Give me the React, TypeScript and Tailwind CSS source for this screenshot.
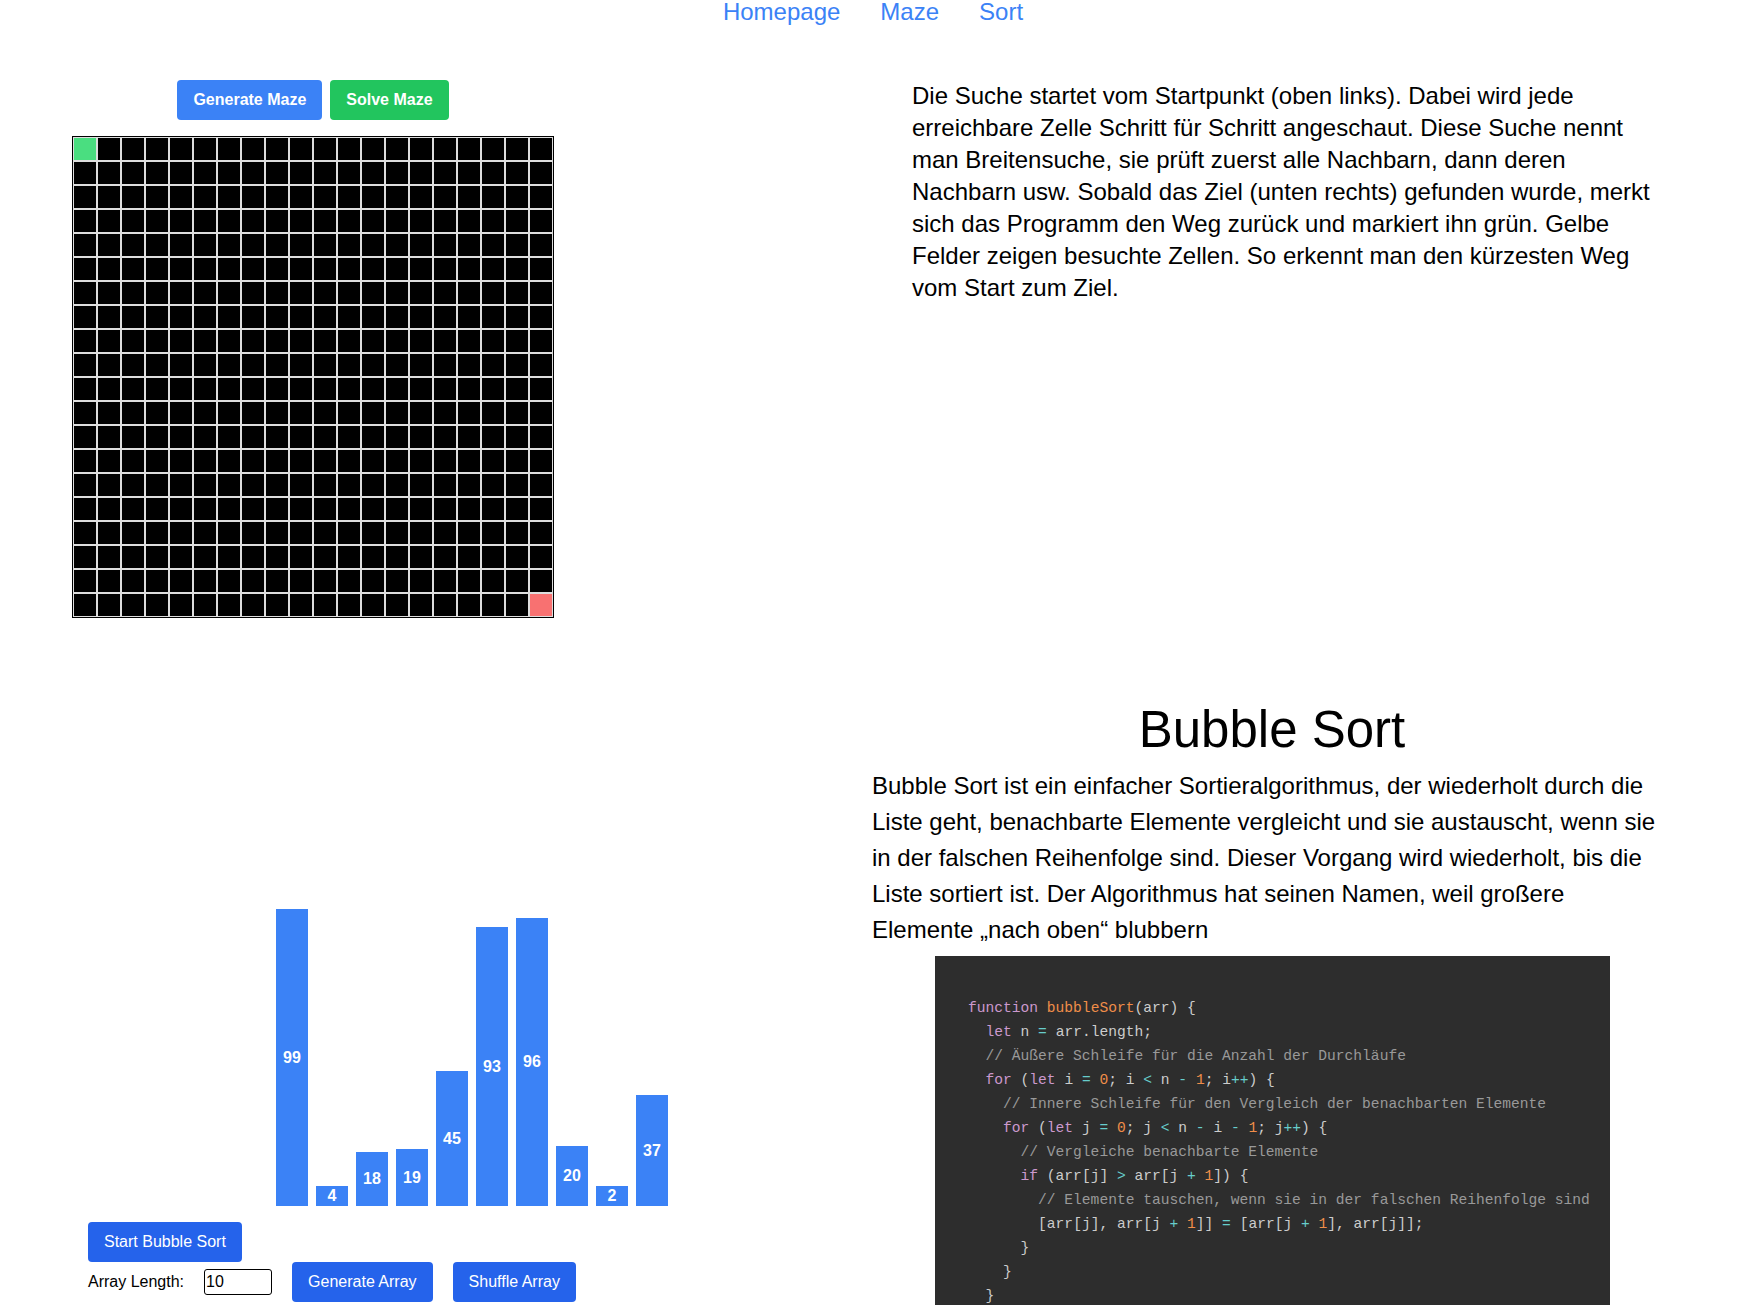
import React from 'react'

const BARS = [99, 4, 18, 19, 45, 93, 96, 20, 2, 37]
const SIZE = 20

const CODE_LINES = [
  '',
  '  function bubbleSort(arr) {',
  '    let n = arr.length;',
  '    // Äußere Schleife für die Anzahl der Durchläufe',
  '    for (let i = 0; i < n - 1; i++) {',
  '      // Innere Schleife für den Vergleich der benachbarten Elemente',
  '      for (let j = 0; j < n - i - 1; j++) {',
  '        // Vergleiche benachbarte Elemente',
  '        if (arr[j] > arr[j + 1]) {',
  '          // Elemente tauschen, wenn sie in der falschen Reihenfolge sind',
  '          [arr[j], arr[j + 1]] = [arr[j + 1], arr[j]];',
  '        }',
  '      }',
  '    }',
  '    return arr;',
  '  }',
]

const TOKEN_CLASS: Record<string, string> = {
  cm: 'text-[#999999]',
  kw: 'text-[#cc99cd]',
  fn: 'text-[#f08d49]',
  num: 'text-[#f08d49]',
  op: 'text-[#67cdcc]',
  p: 'text-[#cccccc]',
}

function tokenize(line: string) {
  const out: [string, string][] = []
  const re = /(\/\/.*)|\b(function|let|for|if|return)\b|(bubbleSort)|(\d+)|(\+\+|[=<>+-])|([^\s\w]+|\w+|\s+)/g
  let m: RegExpExecArray | null
  while ((m = re.exec(line))) {
    if (m[1]) out.push([m[1], 'cm'])
    else if (m[2]) out.push([m[2], 'kw'])
    else if (m[3]) out.push([m[3], 'fn'])
    else if (m[4]) out.push([m[4], 'num'])
    else if (m[5]) out.push([m[5], 'op'])
    else out.push([m[6], 'p'])
  }
  return out
}

function Maze() {
  const cells = []
  for (let r = 0; r < SIZE; r++) {
    for (let c = 0; c < SIZE; c++) {
      let bg = 'bg-black'
      if (r === 0 && c === 0) bg = 'bg-[#4ade80]'
      if (r === SIZE - 1 && c === SIZE - 1) bg = 'bg-[#f87171]'
      cells.push(<div key={`${r}-${c}`} className={`size-6 border border-[#dddddd] ${bg}`} />)
    }
  }
  return <div className="grid w-fit grid-cols-[repeat(20,24px)] border border-black">{cells}</div>
}

export default function App() {
  return (
    <div className="min-h-screen bg-white text-black font-['Liberation_Sans',Arial,sans-serif]">
      <nav className="flex justify-center gap-10 pl-2 text-2xl leading-none text-[#3b82f6]">
        <a href="#">Homepage</a>
        <a href="#">Maze</a>
        <a href="#">Sort</a>
      </nav>

      <section className="mt-14 grid grid-cols-2">
        <div className="pl-[72px]">
          <div className="flex w-[482px] flex-col items-center gap-4">
            <div className="flex gap-2">
              <button className="rounded bg-[#3b82f6] px-4 py-2 text-base leading-6 font-bold text-white">
                Generate Maze
              </button>
              <button className="rounded bg-[#22c55e] px-4 py-2 text-base leading-6 font-bold text-white">
                Solve Maze
              </button>
            </div>
            <Maze />
          </div>
        </div>
        <div className="pl-[43px]">
          <p className="w-[752px] text-2xl leading-8">
            Die Suche startet vom Startpunkt (oben links). Dabei wird jede erreichbare Zelle Schritt für Schritt
            angeschaut. Diese Suche nennt man Breitensuche, sie prüft zuerst alle Nachbarn, dann deren Nachbarn usw.
            Sobald das Ziel (unten rechts) gefunden wurde, merkt sich das Programm den Weg zurück und markiert ihn
            grün. Gelbe Felder zeigen besuchte Zellen. So erkennt man den kürzesten Weg vom Start zum Ziel.
          </p>
        </div>
      </section>

      <section className="mt-[81px] grid grid-cols-2">
        <div className="pl-[88px] pt-[207px]">
          <div className="flex h-[300px] w-[768px] items-end justify-center gap-2">
            {BARS.map((v, i) => (
              <div
                key={i}
                className="flex w-8 items-center justify-center bg-[#3b82f6] text-base font-bold text-white"
                style={{ height: Math.max(v * 3, 20) }}
              >
                {v}
              </div>
            ))}
          </div>
          <div className="mt-4 flex flex-col items-start">
            <button className="rounded bg-[#2563eb] px-4 py-2 text-base leading-6 text-white">Start Bubble Sort</button>
            <div className="flex items-center gap-5 text-base">
              <label>Array Length:</label>
              <input
                type="number"
                defaultValue={10}
                className="h-[26px] w-[68px] rounded-[3px] border border-black px-[1px] text-base [appearance:textfield]"
              />
              <button className="rounded bg-[#2563eb] px-4 py-2 leading-6 text-white">Generate Array</button>
              <button className="rounded bg-[#2563eb] px-4 py-2 leading-6 text-white">Shuffle Array</button>
            </div>
          </div>
        </div>

        <div className="pl-[3px] pt-[2px]">
          <div className="w-[800px]">
            <h1 className="text-center text-[51px] leading-[58px]">Bubble Sort</h1>
            <p className="mt-[9px] w-[792px] text-2xl leading-9">
              Bubble Sort ist ein einfacher Sortieralgorithmus, der wiederholt durch die Liste geht, benachbarte
              Elemente vergleicht und sie austauscht, wenn sie in der falschen Reihenfolge sind. Dieser Vorgang wird
              wiederholt, bis die Liste sortiert ist. Der Algorithmus hat seinen Namen, weil großere Elemente „nach
              oben“ blubbern
            </p>
            <pre className="mx-auto mt-2 w-[675px] overflow-hidden bg-[#2d2d2d] p-4 text-[14.6px] leading-6 text-[#cccccc] font-['Liberation_Mono',monospace]">
              {CODE_LINES.map((line, i) => (
                <div key={i} className="h-6 whitespace-pre">
                  {tokenize(line).map(([t, k], j) => (
                    <span key={j} className={TOKEN_CLASS[k]}>
                      {t}
                    </span>
                  ))}
                </div>
              ))}
            </pre>
          </div>
        </div>
      </section>
    </div>
  )
}
